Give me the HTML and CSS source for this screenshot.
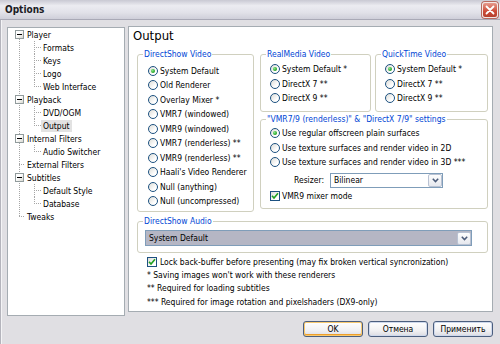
FILE: index.html
```html
<!DOCTYPE html>
<html>
<head>
<meta charset="utf-8">
<title>Options</title>
<link rel="stylesheet" href="styles.css">
</head>
<body>
<div class="window">
  <div class="titlebar">
    <span class="title">Options</span>
    <span class="close"><svg width="10" height="10" viewBox="0 0 10 10"><path d="M1.5 1.5 L8.5 8.5 M8.5 1.5 L1.5 8.5" stroke="#fff" stroke-width="1.8" stroke-linecap="round"/></svg></span>
  </div>
  <div class="main">
    <div class="tree">
      <div class="tree-list">
        <div class="node root"><span class="box"></span><span class="label">Player</span></div>
        <div class="node child"><span class="stub"></span><span class="label">Formats</span></div>
        <div class="node child"><span class="stub"></span><span class="label">Keys</span></div>
        <div class="node child"><span class="stub"></span><span class="label">Logo</span></div>
        <div class="node child"><span class="stub last"></span><span class="label">Web Interface</span></div>
        <div class="node root"><span class="box"></span><span class="label">Playback</span></div>
        <div class="node child"><span class="stub"></span><span class="label">DVD/OGM</span></div>
        <div class="node child"><span class="stub last"></span><span class="label selected">Output</span></div>
        <div class="node root"><span class="box"></span><span class="label">Internal Filters</span></div>
        <div class="node child"><span class="stub last"></span><span class="label">Audio Switcher</span></div>
        <div class="node root"><span class="rstub"></span><span class="label">External Filters</span></div>
        <div class="node root"><span class="box"></span><span class="label">Subtitles</span></div>
        <div class="node child"><span class="stub"></span><span class="label">Default Style</span></div>
        <div class="node child"><span class="stub last"></span><span class="label">Database</span></div>
        <div class="node root"><span class="rstub"></span><span class="label">Tweaks</span></div>
      </div>
    </div>
    <div class="page">
      <div class="page-title">Output</div>
      <div class="cols">
        <fieldset class="group dsv">
          <legend>DirectShow Video</legend>
          <div class="opts">
            <div class="opt"><span class="radio on"></span>System Default</div>
            <div class="opt"><span class="radio"></span>Old Renderer</div>
            <div class="opt"><span class="radio"></span>Overlay Mixer *</div>
            <div class="opt"><span class="radio"></span>VMR7 (windowed)</div>
            <div class="opt"><span class="radio"></span>VMR9 (windowed)</div>
            <div class="opt"><span class="radio"></span>VMR7 (renderless) **</div>
            <div class="opt"><span class="radio"></span>VMR9 (renderless) **</div>
            <div class="opt"><span class="radio"></span>Haali's Video Renderer</div>
            <div class="opt"><span class="radio"></span>Null (anything)</div>
            <div class="opt"><span class="radio"></span>Null (uncompressed)</div>
          </div>
        </fieldset>
        <div class="rightcol">
          <div class="toprow">
            <fieldset class="group rm">
              <legend>RealMedia Video</legend>
              <div class="opts">
                <div class="opt"><span class="radio on"></span>System Default *</div>
                <div class="opt"><span class="radio"></span>DirectX 7 **</div>
                <div class="opt"><span class="radio"></span>DirectX 9 **</div>
              </div>
            </fieldset>
            <fieldset class="group qt">
              <legend>QuickTime Video</legend>
              <div class="opts">
                <div class="opt"><span class="radio on"></span>System Default *</div>
                <div class="opt"><span class="radio"></span>DirectX 7 **</div>
                <div class="opt"><span class="radio"></span>DirectX 9 **</div>
              </div>
            </fieldset>
          </div>
          <fieldset class="group vmr">
            <legend>"VMR7/9 (renderless)" &amp; "DirectX 7/9" settings</legend>
            <div class="opts">
              <div class="opt"><span class="radio on"></span>Use regular offscreen plain surfaces</div>
              <div class="opt"><span class="radio"></span>Use texture surfaces and render video in 2D</div>
              <div class="opt"><span class="radio"></span>Use texture surfaces and render video in 3D ***</div>
              <div class="resizer">
                <span class="rlabel">Resizer:</span>
                <div class="combo white"><span class="value">Bilinear</span><span class="drop"><svg width="7" height="5" viewBox="0 0 7 5"><path d="M0.8 0.8 L3.5 3.6 L6.2 0.8" fill="none" stroke="#4a5a78" stroke-width="1.5"/></svg></span></div>
              </div>
              <div class="opt"><span class="cb"><svg width="8" height="8" viewBox="0 0 8 8"><path d="M1 3.8 L3 6 L7 1.2" fill="none" stroke="#21a121" stroke-width="1.6"/></svg></span>VMR9 mixer mode</div>
            </div>
          </fieldset>
        </div>
      </div>
      <fieldset class="group audio">
        <legend>DirectShow Audio</legend>
        <div class="combo gray"><span class="value">System Default</span><span class="drop"><svg width="7" height="5" viewBox="0 0 7 5"><path d="M0.8 0.8 L3.5 3.6 L6.2 0.8" fill="none" stroke="#4a5a78" stroke-width="1.5"/></svg></span></div>
      </fieldset>
      <div class="lock"><span class="cb"><svg width="8" height="8" viewBox="0 0 8 8"><path d="M1 3.8 L3 6 L7 1.2" fill="none" stroke="#21a121" stroke-width="1.6"/></svg></span>Lock back-buffer before presenting (may fix broken vertical syncronization)</div>
      <div class="notes">
        <div>* Saving images won't work with these renderers</div>
        <div>** Required for loading subtitles</div>
        <div>*** Required for image rotation and pixelshaders (DX9-only)</div>
      </div>
    </div>
  </div>
  <div class="buttons">
    <button class="btn default">OK</button>
    <button class="btn">Отмена</button>
    <button class="btn">Применить</button>
  </div>
</div>
</body>
</html>
```

FILE: styles.css
```css
* { box-sizing: border-box; }
html, body { margin: 0; padding: 0; }
body {
  width: 500px;
  height: 344px;
  overflow: hidden;
  background: #e0dfe3;
  font-family: "DejaVu Sans Condensed", "DejaVu Sans", sans-serif;
  font-stretch: condensed;
  font-size: 8.5px;
  color: #000;
}
.window {
  width: 500px;
  height: 344px;
  display: flex;
  flex-direction: column;
  box-shadow: inset 1px 0 #b4b4bc, inset 2px 0 #f4f4f6;
}
.titlebar {
  height: 20px;
  flex: none;
  display: flex;
  align-items: center;
  justify-content: space-between;
  padding: 0 2px 0 5px;
  background: linear-gradient(#c9c9d3, #ececf1 30%, #e2e2e9 65%, #cfcfd9);
  border-bottom: 1px solid #a9a9b6;
}
.title {
  font-family: "DejaVu Sans Condensed", "DejaVu Sans", sans-serif;
  font-weight: bold;
  font-size: 10px;
  color: #1c1c24;
}
.close {
  width: 16px;
  height: 16px;
  border-radius: 3px;
  border: 1px solid #f4e8e6;
  background: linear-gradient(#e59a8d, #cc4b38 60%, #b5402e);
  display: flex;
  align-items: center;
  justify-content: center;
  box-shadow: 0 0 0 1px #b86a60;
}
.main {
  display: flex;
  align-items: flex-start;
  gap: 3px;
  padding: 6px 7px 0 7px;
}
.tree {
  width: 118px;
  height: 289px;
  margin-top: 1px;
  flex: none;
  background: #fff;
  border: 1px solid #a5acb2;
}
.tree-list {
  background: repeating-linear-gradient(to bottom, #a6a6a6 0 1px, transparent 1px 2px) no-repeat 11px 7px / 1px 182px;
}
.node {
  display: flex;
  align-items: center;
  height: 13px;
}
.node.root { padding-left: 7px; }
.node.child { padding-left: 26px; }
.box {
  width: 9px;
  height: 9px;
  margin-right: 1px;
  border: 1px solid #919b9c;
  background: linear-gradient(135deg, #fff 40%, #d8d8d0);
  display: flex;
  align-items: center;
  justify-content: center;
}
.box::after {
  content: "";
  width: 5px;
  height: 1px;
  background: #000;
}
.rstub {
  width: 10px;
  height: 13px;
  background: repeating-linear-gradient(to right, #a6a6a6 0 1px, transparent 1px 2px) no-repeat 4px 6px / 6px 1px;
}
.stub {
  width: 7px;
  height: 13px;
  background:
    repeating-linear-gradient(to right, #a6a6a6 0 1px, transparent 1px 2px) no-repeat 0 6px / 7px 1px,
    repeating-linear-gradient(to bottom, #a6a6a6 0 1px, transparent 1px 2px) no-repeat 0 0 / 1px 13px;
}
.stub.last {
  background:
    repeating-linear-gradient(to right, #a6a6a6 0 1px, transparent 1px 2px) no-repeat 0 6px / 7px 1px,
    repeating-linear-gradient(to bottom, #a6a6a6 0 1px, transparent 1px 2px) no-repeat 0 0 / 1px 7px;
}
.label {
  padding: 0 2px;
  line-height: 12px;
  white-space: nowrap;
}
.label.selected { background: #e2e2e2; }

.page {
  flex: 1;
  height: 286px;
  background: #fff;
  border: 1px solid #a5acb2;
  padding: 0 4px 0 8px;
}
.page-title {
  font-size: 13px;
  line-height: 16px;
  padding-top: 1px;
  margin: 0 0 5px -4px;
}
.cols {
  display: flex;
  gap: 6px;
}
.group {
  margin: 0;
  padding: 0;
  min-width: 0;
  border: 1px solid #d0d0bf;
  border-radius: 3px;
}
.group legend {
  padding: 0 1px;
  margin-left: 5px;
  line-height: 10px;
  color: #0046d5;
  white-space: nowrap;
}
.opt {
  display: flex;
  align-items: center;
  height: 14.5px;
  white-space: nowrap;
}
.radio {
  flex: none;
  width: 10px;
  height: 10px;
  border-radius: 50%;
  border: 1px solid #1c5180;
  background: linear-gradient(135deg, #dcdcd7, #fff 70%);
  margin-right: 2px;
  display: flex;
  align-items: center;
  justify-content: center;
}
.radio.on::after {
  content: "";
  width: 4px;
  height: 4px;
  border-radius: 50%;
  background: radial-gradient(circle at 35% 35%, #8ae88a, #21a121 70%);
}
.cb {
  flex: none;
  width: 10px;
  height: 10px;
  border: 1px solid #1c5180;
  background: linear-gradient(135deg, #dcdcd7, #fff 70%);
  margin-right: 2px;
  display: flex;
  align-items: center;
  justify-content: center;
}
.dsv { width: 117px; flex: none; }
.dsv .opts { padding: 4.25px 0 3px 10px; }
.rightcol {
  flex: 1;
  display: flex;
  flex-direction: column;
  gap: 2px;
}
.toprow {
  display: flex;
  gap: 4px;
}
.rm { width: 111px; flex: none; }
.qt { flex: 1; }
.rm .opts, .qt .opts { padding: 2.8px 0 6px 9px; }
.vmr .opts { padding: 1.75px 0 5px 9px; }
.resizer {
  display: flex;
  align-items: center;
  height: 16px;
  margin-top: 2.75px;
  padding-left: 24px;
}
.rlabel { width: 36px; }
.combo {
  display: flex;
  align-items: center;
  height: 15px;
  border: 1px solid #7f9db9;
}
.combo .value { flex: 1; padding-left: 3px; line-height: 13px; }
.combo .drop {
  width: 14px;
  height: 13px;
  margin-right: 0;
  border: 1px solid #b9c2d3;
  border-radius: 2px;
  background: linear-gradient(#fdfdfd, #e6e8ee);
  display: flex;
  align-items: center;
  justify-content: center;
}
.combo.white { width: 113px; background: #fff; }
.combo.gray { background: #b5b6c4; margin: 4px 0 6px 7px; width: 327px; height: 16px; }
.audio { margin-top: 4px; }
.lock {
  display: flex;
  align-items: center;
  height: 13px;
  margin-top: 2.5px;
  padding-left: 10px;
  white-space: nowrap;
}
.lock .cb { margin-right: 3px; }
.notes {
  padding-left: 10px;
  line-height: 13.5px;
  white-space: nowrap;
}
.buttons {
  display: flex;
  justify-content: flex-end;
  gap: 5px;
  padding: 5px 7px 0 7px;
}
.btn {
  width: 60px;
  height: 16px;
  padding: 0;
  font-family: "DejaVu Sans Condensed", "DejaVu Sans", sans-serif;
  font-stretch: condensed;
  font-size: 8.5px;
  color: #000;
  border: 1px solid #4b5e7e;
  border-radius: 3px;
  background: linear-gradient(#ffffff, #f1f1f3 60%, #dcdce2);
  box-shadow: inset 0 0 0 1px #cfd9ec;
}
.btn.default {
  box-shadow: inset 0 0 0 1px #f7c970, inset 0 -1px 0 1px #ee9f2a;
}
```
